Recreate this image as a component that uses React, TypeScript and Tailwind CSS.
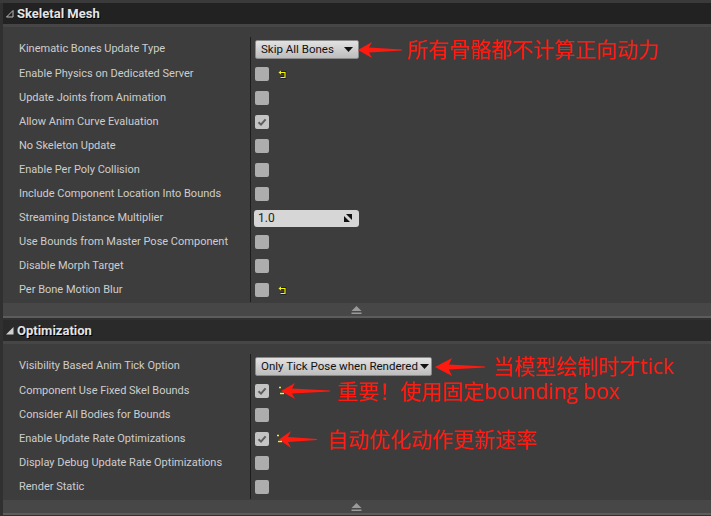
import React from 'react';

type Control =
  | { kind: 'check'; checked?: boolean; reset?: boolean }
  | { kind: 'select'; value: string; width: string }
  | { kind: 'number'; value: string };

interface Note {
  left: string;
  arrowW: number;
  arrowH: number;
  headW: number;
  gap: string;
  text: string;
  mark?: boolean;
}

interface Row {
  label: string;
  control: Control;
  note?: Note;
  tall?: boolean;
}

const skeletalRows: Row[] = [
  {
    label: 'Kinematic Bones Update Type',
    control: { kind: 'select', value: 'Skip All Bones', width: 'w-[104px]' },
    note: { left: 'left-[107px]', arrowW: 44, arrowH: 16, headW: 14, gap: 'gap-[5px]', text: '所有骨骼都不计算正向动力' },
    tall: true,
  },
  { label: 'Enable Physics on Dedicated Server', control: { kind: 'check', reset: true } },
  { label: 'Update Joints from Animation', control: { kind: 'check' } },
  { label: 'Allow Anim Curve Evaluation', control: { kind: 'check', checked: true } },
  { label: 'No Skeleton Update', control: { kind: 'check' } },
  { label: 'Enable Per Poly Collision', control: { kind: 'check' } },
  { label: 'Include Component Location Into Bounds', control: { kind: 'check' } },
  { label: 'Streaming Distance Multiplier', control: { kind: 'number', value: '1.0' } },
  { label: 'Use Bounds from Master Pose Component', control: { kind: 'check' } },
  { label: 'Disable Morph Target', control: { kind: 'check' } },
  { label: 'Per Bone Motion Blur', control: { kind: 'check', reset: true } },
];

const optimizationRows: Row[] = [
  {
    label: 'Visibility Based Anim Tick Option',
    control: { kind: 'select', value: 'Only Tick Pose when Rendered', width: 'w-[177px]' },
    note: { left: 'left-[184px]', arrowW: 50, arrowH: 18, headW: 17, gap: 'gap-[8px]', text: '当模型绘制时才tick' },
    tall: true,
  },
  {
    label: 'Component Use Fixed Skel Bounds',
    control: { kind: 'check', checked: true },
    note: { left: 'left-[30px]', arrowW: 49, arrowH: 16, headW: 14, gap: 'gap-[7px]', text: '重要！使用固定bounding box', mark: true },
  },
  { label: 'Consider All Bodies for Bounds', control: { kind: 'check' } },
  {
    label: 'Enable Update Rate Optimizations',
    control: { kind: 'check', checked: true },
    note: { left: 'left-[28px]', arrowW: 38, arrowH: 17, headW: 12, gap: 'gap-[10px]', text: '自动优化动作更新速率', mark: true },
  },
  { label: 'Display Debug Update Rate Optimizations', control: { kind: 'check' } },
  { label: 'Render Static', control: { kind: 'check' } },
];

function ResetIcon() {
  return (
    <svg width="9" height="9" viewBox="0 0 9 9" className="ml-[9px]">
      <path d="M2.5 2.5 H7 V7.5 H2.5" fill="none" stroke="#1a1a1a" strokeWidth="2.4" />
      <path d="M2.5 2.5 H7 V7.5 H2.5" fill="none" stroke="#f5f500" strokeWidth="1.2" />
      <path d="M0.5 2.5 L3 0.5 V4.5 Z" fill="#f5f500" />
    </svg>
  );
}

function Checkbox({ checked }: { checked?: boolean }) {
  return (
    <div
      className={`w-[14px] h-[14px] rounded-[2px] flex items-center justify-center ${
        checked ? 'bg-[#c4c4c4]' : 'bg-[#adadad]'
      }`}
    >
      {checked && (
        <svg width="10" height="10" viewBox="0 0 10 10">
          <path d="M1.5 5.2 L4 7.6 L8.6 2.4" fill="none" stroke="#5e5e5e" strokeWidth="2" />
        </svg>
      )}
    </div>
  );
}

function Select({ value, width }: { value: string; width: string }) {
  return (
    <div
      className={`${width} h-[19px] flex items-center justify-between pl-[5px] pr-[5px] rounded-[2px] border border-[#8a8a8a] bg-gradient-to-b from-[#e2e2e2] to-[#bdbdbd] text-[11.5px] text-[#111] leading-none whitespace-nowrap`}
    >
      <span>{value}</span>
      <svg width="9" height="5" viewBox="0 0 9 5" className="ml-[2px] shrink-0">
        <path d="M0 0 H9 L4.5 5 Z" fill="#111" />
      </svg>
    </div>
  );
}

function NumberBox({ value }: { value: string }) {
  return (
    <div className="w-[105px] h-[17px] -ml-[1px] flex items-center justify-between pl-[4px] pr-[7px] rounded-[3px] bg-[#d6d6d6] text-[12px] text-[#222] leading-none">
      <span>{value}</span>
      <svg width="8" height="8" viewBox="0 0 8 8">
        <path d="M2 0 H8 V6 Z" fill="#111" />
        <path d="M0 2 L6 8 H0 Z" fill="#111" />
      </svg>
    </div>
  );
}

function Arrow({ w, h, hw }: { w: number; h: number; hw: number }) {
  const m = h / 2;
  const pts = `0,${m} ${hw},0 ${hw - 3},${m - 2.6} ${w},${m - 0.6} ${w},${m + 0.6} ${hw - 3},${m + 2.6} ${hw},${h}`;
  return (
    <svg width={w} height={h} viewBox={`0 0 ${w} ${h}`} className="shrink-0">
      <polygon points={pts} fill="#ff1a10" />
    </svg>
  );
}

function Annotation({ note }: { note: Note }) {
  return (
    <div className={`absolute top-0 bottom-0 ${note.left} flex items-center ${note.gap} whitespace-nowrap`}>
      {note.mark && (
        <svg width="9" height="9" viewBox="0 0 9 9" className="absolute -left-[3px] top-[7px]">
          <path d="M1 1.5 H3 M2 0.5 V2.5" stroke="#f5f500" strokeWidth="1" />
          <path d="M2 7.5 H6" stroke="#f5f500" strokeWidth="1.4" />
        </svg>
      )}
      <Arrow w={note.arrowW} h={note.arrowH} hw={note.headW} />
      <span className="text-[21px] leading-none text-[#ff1a10] font-['Open_Sans','Noto_Sans_CJK_SC',sans-serif]">
        {note.text}
      </span>
    </div>
  );
}

function PropertyRow({ row }: { row: Row }) {
  const c = row.control;
  return (
    <div className={`flex ${row.tall ? 'h-[25px]' : 'h-[24px]'}`}>
      <div className="w-[247px] pl-[16px] flex items-center text-[11px] text-[#cdcdcd] whitespace-nowrap">
        {row.label}
      </div>
      <div className="relative flex-1 border-l border-[#1c1c1c] pl-[4px] flex items-center">
        {c.kind === 'check' && (
          <>
            <Checkbox checked={c.checked} />
            {c.reset && <ResetIcon />}
          </>
        )}
        {c.kind === 'select' && <Select value={c.value} width={c.width} />}
        {c.kind === 'number' && <NumberBox value={c.value} />}
        {row.note && <Annotation note={row.note} />}
      </div>
    </div>
  );
}

function Section({
  title,
  rows,
  open,
  headerBg,
}: {
  title: string;
  rows: Row[];
  open: boolean;
  headerBg: string;
}) {
  return (
    <div>
      <div className={`h-[21px] ${headerBg} flex items-center pl-[3px] gap-[3px]`}>
        <svg width="8" height="8" viewBox="0 0 8 8">
          {open ? (
            <path d="M7 0.5 V7 H0.5 Z" fill="none" stroke="#bdbdbd" strokeWidth="1" />
          ) : (
            <path d="M7.5 0 V7.5 H0 Z" fill="#cfcfcf" />
          )}
        </svg>
        <span className="text-[13px] font-bold text-[#e4e4e4] [text-shadow:1px_1px_0_#000]">{title}</span>
      </div>
      <div className="h-[3px] bg-[#464646]" />
      <div className="bg-[#3d3d3d] pt-[10px] pb-[1px]">
        {rows.map((row) => (
          <PropertyRow key={row.label} row={row} />
        ))}
      </div>
      <div className="h-[15px] bg-[#474747] border-b-2 border-[#5c5c5c] flex justify-center items-start pt-[3px]">
        <svg width="11" height="9" viewBox="0 0 11 9" className="-ml-[2px]">
          <path d="M5.5 0 L10.5 5 H0.5 Z" fill="#9a9a9a" />
          <rect x="0.5" y="6.5" width="10" height="1.5" fill="#9a9a9a" />
        </svg>
      </div>
    </div>
  );
}

export default function App() {
  return (
    <div className="w-[711px] h-[516px] overflow-hidden bg-[#303030] pl-[3px] font-['Roboto','Liberation_Sans',sans-serif]">
      <div className="h-[3px] bg-[#3a3a3a] -ml-[3px]" />
      <Section title="Skeletal Mesh" rows={skeletalRows} open headerBg="bg-[#222222]" />
      <div className="h-[2px]" />
      <Section title="Optimization" rows={optimizationRows} open={false} headerBg="bg-[#2a2a2a]" />
    </div>
  );
}
